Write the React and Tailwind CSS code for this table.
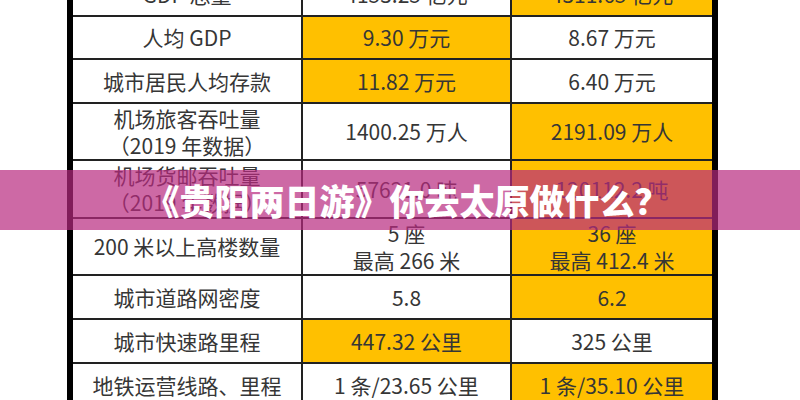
import React from "react";

const rows = [
  { label: ["GDP 总量"], a: ["4153.25 亿元"], b: ["4311.65 亿元"], hl: "b" },
  { label: ["人均 GDP"], a: ["9.30 万元"], b: ["8.67 万元"], hl: "a" },
  { label: ["城市居民人均存款"], a: ["11.82 万元"], b: ["6.40 万元"], hl: "a" },
  { label: ["机场旅客吞吐量", "（2019 年数据）"], a: ["1400.25 万人"], b: ["2191.09 万人"], hl: "b" },
  { label: ["机场货邮吞吐量", "（2019 年数据）"], a: ["57621.0 吨"], b: ["120112.2 吨"], hl: "b" },
  { label: ["200 米以上高楼数量"], a: ["5 座", "最高 266 米"], b: ["36 座", "最高 412.4 米"], hl: "b" },
  { label: ["城市道路网密度"], a: ["5.8"], b: ["6.2"], hl: "b" },
  { label: ["城市快速路里程"], a: ["447.32 公里"], b: ["325 公里"], hl: "a" },
  { label: ["地铁运营线路、里程"], a: ["1 条/23.65 公里"], b: ["1 条/35.10 公里"], hl: "b" },
];

function Cell({ lines, yellow }) {
  return (
    <div
      className={
        "flex flex-col items-center justify-center text-[21px] leading-[27px] text-[#363636] " +
        (yellow ? "bg-[#ffc000]" : "bg-white")
      }
    >
      {lines.map((l, i) => (
        <div key={i} className="whitespace-nowrap">{l}</div>
      ))}
    </div>
  );
}

export default function App() {
  return (
    <div
      className="relative w-[800px] h-[400px] overflow-hidden bg-white"
      style={{ fontFamily: '"Noto Sans CJK SC", "Noto Sans", sans-serif' }}
    >
      <div className="ml-[67px] -mt-[27px] w-[651px] border-x-[6px] border-black bg-[#222222]">
        <div className="grid grid-cols-[228px_207px_200px] grid-rows-[42px_41px_42px_55px_56px_55px_42px_42px_42px] gap-[2px]">
          {rows.map((r, i) => (
            <React.Fragment key={i}>
              <Cell lines={r.label} yellow={false} />
              <Cell lines={r.a} yellow={r.hl === "a"} />
              <Cell lines={r.b} yellow={r.hl === "b"} />
            </React.Fragment>
          ))}
        </div>
      </div>
      <div className="absolute left-0 right-0 top-[170px] h-[60px] bg-[#b8297f]/70 flex items-center justify-center">
        <span className="text-white font-black text-[35px] leading-none whitespace-nowrap pl-[14px] pb-[2px]">
          《贵阳两日游》你去太原做什么？
        </span>
      </div>
    </div>
  );
}
